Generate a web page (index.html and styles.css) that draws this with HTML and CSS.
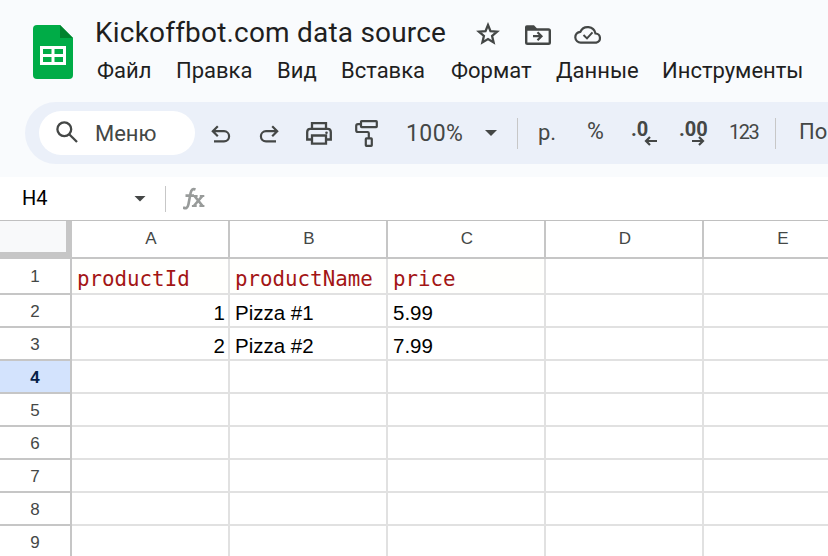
FILE: index.html
```html
<!DOCTYPE html>
<html lang="ru">
<head>
<meta charset="utf-8">
<title>Kickoffbot.com data source</title>
<link rel="stylesheet" href="styles.css">
</head>
<body>
<header class="header">
  <svg class="logo" width="40" height="54" viewBox="0 0 40 54">
    <path fill="#00ac47" d="M4 0h23l13 13v37a4 4 0 0 1-4 4H4a4 4 0 0 1-4-4V4a4 4 0 0 1 4-4z"/>
    <path fill="#00832d" d="M27 0l13 13H27z"/>
    <path fill="#fff" fill-rule="evenodd" d="M7 21h26v19H7zM10 24v5h8.500v-5zM21.500 24v5H30v-5zM10 32v5h8.500v-5zM21.500 32v5H30v-5z"/>
  </svg>
  <div class="heading">
    <div class="title-row">
      <h1 class="title">Kickoffbot.com data source</h1>
      <svg class="star" width="24" height="23" viewBox="0 0 24 23"><path fill="none" stroke="#444746" stroke-width="2.300" d="M12 3l2.500 6.100 6.600.55-5 4.300 1.500 6.450L12 17l-5.600 3.400 1.500-6.450-5-4.300 6.600-.55z"/></svg>
      <svg class="folder" width="26" height="20" viewBox="0 0 26 20"><path fill="none" stroke="#444746" stroke-width="2.400" stroke-linejoin="round" d="M1.200 4.500h22.300q1.300 0 1.300 1.300v11.700q0 1.300-1.300 1.300h-21q-1.300 0-1.300-1.300z"/><path fill="#444746" d="M0 5V2Q0 .2 1.800.2H9l3 3.300V5z"/><path fill="none" stroke="#444746" stroke-width="2.200" d="M8 11.200h8.500M12.500 7.200l4 4-4 4"/></svg>
      <svg class="cloud" width="28" height="19" viewBox="0 0 28 19"><path fill="none" stroke="#444746" stroke-width="2.200" d="M7 17.600a5.400 5.400 0 0 1-.6-10.800A8 8 0 0 1 21.500 8.500a4.600 4.600 0 0 1 .8 9.100z"/><path fill="none" stroke="#444746" stroke-width="2" d="M9.500 10l3.500 3.400 5.500-6"/></svg>
    </div>
    <nav class="menus"><span>Файл</span><span>Правка</span><span>Вид</span><span>Вставка</span><span>Формат</span><span>Данные</span><span>Инструменты</span></nav>
  </div>
</header>
<div class="toolbar">
  <div class="search">
    <svg width="22" height="22" viewBox="0 0 22 22"><g fill="none" stroke="#444746" stroke-width="2.300"><circle cx="8.300" cy="8.300" r="6.900"/><path d="M13.200 13.200l7.800 7.800"/></g></svg>
    <span>Меню</span>
  </div>
  <div class="tools">
    <svg class="undo" width="20" height="18" viewBox="0 0 20 18"><path fill="none" stroke="#444746" stroke-width="2.200" d="M3 16.400h10a5.100 5.100 0 0 0 0-10.200H2M6.800 1.200l-5 5 5 5"/></svg>
    <svg class="undo" width="20" height="18" viewBox="0 0 20 18"><path fill="none" stroke="#444746" stroke-width="2.200" d="M17 16.400H7A5.100 5.100 0 0 1 7 6.200h11M13.200 1.200l5 5-5 5"/></svg>
    <svg class="print" width="26" height="23" viewBox="0 0 26 23"><g fill="none" stroke="#444746" stroke-width="2.300"><path d="M6 6.500V1.200h14v5.300M6 17.500H1.200V10q0-3.200 3.200-3.200h17.200q3.200 0 3.200 3.200v7.500H20"/><path d="M6 13.500h14v8.200H6z"/></g><circle cx="20.500" cy="10.700" r="1.300" fill="#444746"/></svg>
    <svg class="roller" width="23" height="27" viewBox="0 0 23 27"><g fill="none" stroke="#444746" stroke-width="2.200"><rect x="6" y="1.200" width="15.800" height="6" rx=".6"/><path d="M6 4.200H3Q1.200 4.200 1.200 6v4.200Q1.200 12 3 12h9.500q1.300 0 1.300 1.300V18"/><rect x="10.800" y="18.400" width="6" height="7.400" rx=".6"/></g></svg>
    <span class="zoom">100%</span>
    <i class="caret"></i>
    <i class="divider"></i>
    <span class="currency">р.</span>
    <span class="percent">%</span>
    <span class="decimal">.0<svg width="13" height="10" viewBox="0 0 13 10"><path fill="none" stroke="#444746" stroke-width="2.200" d="M13 5H2M6 1L2 5l4 4"/></svg></span>
    <span class="decimal">.00<svg width="13" height="10" viewBox="0 0 13 10"><path fill="none" stroke="#444746" stroke-width="2.200" d="M0 5h11M7 1l4 4-4 4"/></svg></span>
    <span class="numbers">123</span>
    <i class="divider"></i>
    <span class="font">По</span>
  </div>
</div>
<div class="formula">
  <span class="cell-name">H4</span><i class="caret"></i><i class="divider"></i>
  <svg class="fx" width="24" height="24" viewBox="0 0 24 24"><g fill="none" stroke="#989b9a" stroke-width="2.600"><path d="M0 20.500c3 1.500 4.800.2 5.400-3L7.600 6C8.200 2.800 9.800 1.400 12.500 2.500M2.500 8.600H11"/><path d="M10.800 19L19.200 9.100M11.600 9.100l8 9.900"/><path stroke-width="2" d="M9.800 9.100h4.800M16.800 9.100h4.500M8.900 19.100h4.800M16.400 19.100h5"/></g></svg>
</div>
<main class="sheet">
  <div class="corner"></div><div class="col">A</div><div class="col">B</div><div class="col">C</div><div class="col">D</div><div class="col">E</div>
  <div class="row first">1</div><div class="code">productId</div><div class="code">productName</div><div class="code">price</div><div></div><div></div>
  <div class="row">2</div><div class="num">1</div><div>Pizza #1</div><div>5.99</div><div></div><div></div>
  <div class="row">3</div><div class="num">2</div><div>Pizza #2</div><div>7.99</div><div></div><div></div>
  <div class="row active">4</div><div></div><div></div><div></div><div></div><div></div>
  <div class="row">5</div><div></div><div></div><div></div><div></div><div></div>
  <div class="row">6</div><div></div><div></div><div></div><div></div><div></div>
  <div class="row">7</div><div></div><div></div><div></div><div></div><div></div>
  <div class="row">8</div><div></div><div></div><div></div><div></div><div></div>
  <div class="row">9</div><div></div><div></div><div></div><div></div><div></div>
</main>
</body>
</html>
```
FILE: styles.css
```css
* { box-sizing: border-box; }
body { margin: 0; width: 828px; height: 556px; overflow: hidden; background: #f9fbfd; font-family: Roboto, sans-serif; color: #1f1f1f; }
svg { display: block; flex: none; }
.header { display: flex; height: 102px; padding-left: 33px; }
.logo { margin-top: 25px; }
.heading { margin-left: 22px; }
.title-row { display: flex; height: 56px; padding-top: 16px; }
.title { width: 381px; margin: 0; font-weight: 400; font-size: 28px; line-height: 34px; letter-spacing: .2px; white-space: nowrap; }
.star { margin-top: 6px; }
.folder { margin: 9px 0 0 25px; }
.cloud { margin: 9px 0 0 23px; }
.menus { display: grid; grid-template-columns: 79px 101px 64px 110px 105px 106px 150px; padding-left: 2px; font-size: 22px; line-height: 30px; white-space: nowrap; }
.toolbar { display: flex; align-items: center; height: 62px; margin-left: 25px; padding-left: 14px; border-radius: 31px 0 0 31px; background: #ebf0f9; color: #444746; overflow: hidden; }
.search { display: flex; flex: none; align-items: center; width: 156px; height: 44px; padding-left: 17px; gap: 17px; border-radius: 22px; background: #fff; font-size: 22px; }
.search svg { margin-top: -2px; }
.tools { display: grid; flex: none; align-items: center; height: 62px; margin-left: 16px; grid-template-columns: 48px 47px 49px 51px 79px 32px 21px 49px 44px 48px 50px 46px 24px 30px; white-space: nowrap; }
.undo { margin-top: 2px; }
.zoom { font-size: 23px; letter-spacing: .4px; }
.caret { width: 12px; height: 6px; background: #444746; clip-path: polygon(0 0, 100% 0, 50% 100%); }
.divider { width: 1px; height: 31px; background: #c7c7c7; }
.currency { margin-top: -2px; font-size: 22px; }
.percent { margin-top: -3px; font-size: 23px; }
.decimal { margin-top: -1px; font-size: 20px; font-weight: 700; line-height: 20px; height: 28px; }
.decimal svg { margin: -3px 0 0 13px; }
.numbers { margin-top: -2px; font-size: 20px; letter-spacing: -1.500px; }
.font { margin-top: -3px; font-size: 22px; }
.formula { display: flex; align-items: center; height: 44px; margin-top: 13px; padding-left: 22px; border-bottom: 1px solid #c0c0c0; background: #fff; }
.cell-name { width: 112px; margin-top: -1px; font-size: 20px; color: #000; }
.formula .divider { height: 26px; margin: 0 17px 0 19px; }
.sheet { display: grid; grid-template-columns: 72px repeat(5, 158px); grid-template-rows: 38px 36px repeat(8, 33px); background: #fff; font: 20.500px/33px "Liberation Sans", Arial, sans-serif; color: #000; }
.sheet > div { padding: 1px 3px 0 5px; border-right: 2px solid #e1e1e1; border-bottom: 2px solid #e1e1e1; }
.sheet > .corner { border: solid #c6c6c6; border-width: 0 6px 7px 0; background: #f8f9fa; }
.sheet > .col { padding: 0 0 0 2px; border-color: #c6c6c6; line-height: 35px; font-size: 17px; text-align: center; color: #444746; }
.sheet > .row { padding: 0; border-color: #c6c6c6; line-height: 33px; font-size: 17px; text-align: center; color: #444746; }
.sheet > .first { line-height: 35px; }
.sheet > .active { background: #d3e3fd; color: #041e49; font-weight: 700; }
.sheet > .num { text-align: right; }
.sheet > .code { padding-top: 3px; background: #fffffd; color: #a31515; font: 20.800px/34px "DejaVu Sans Mono", monospace; }
```
